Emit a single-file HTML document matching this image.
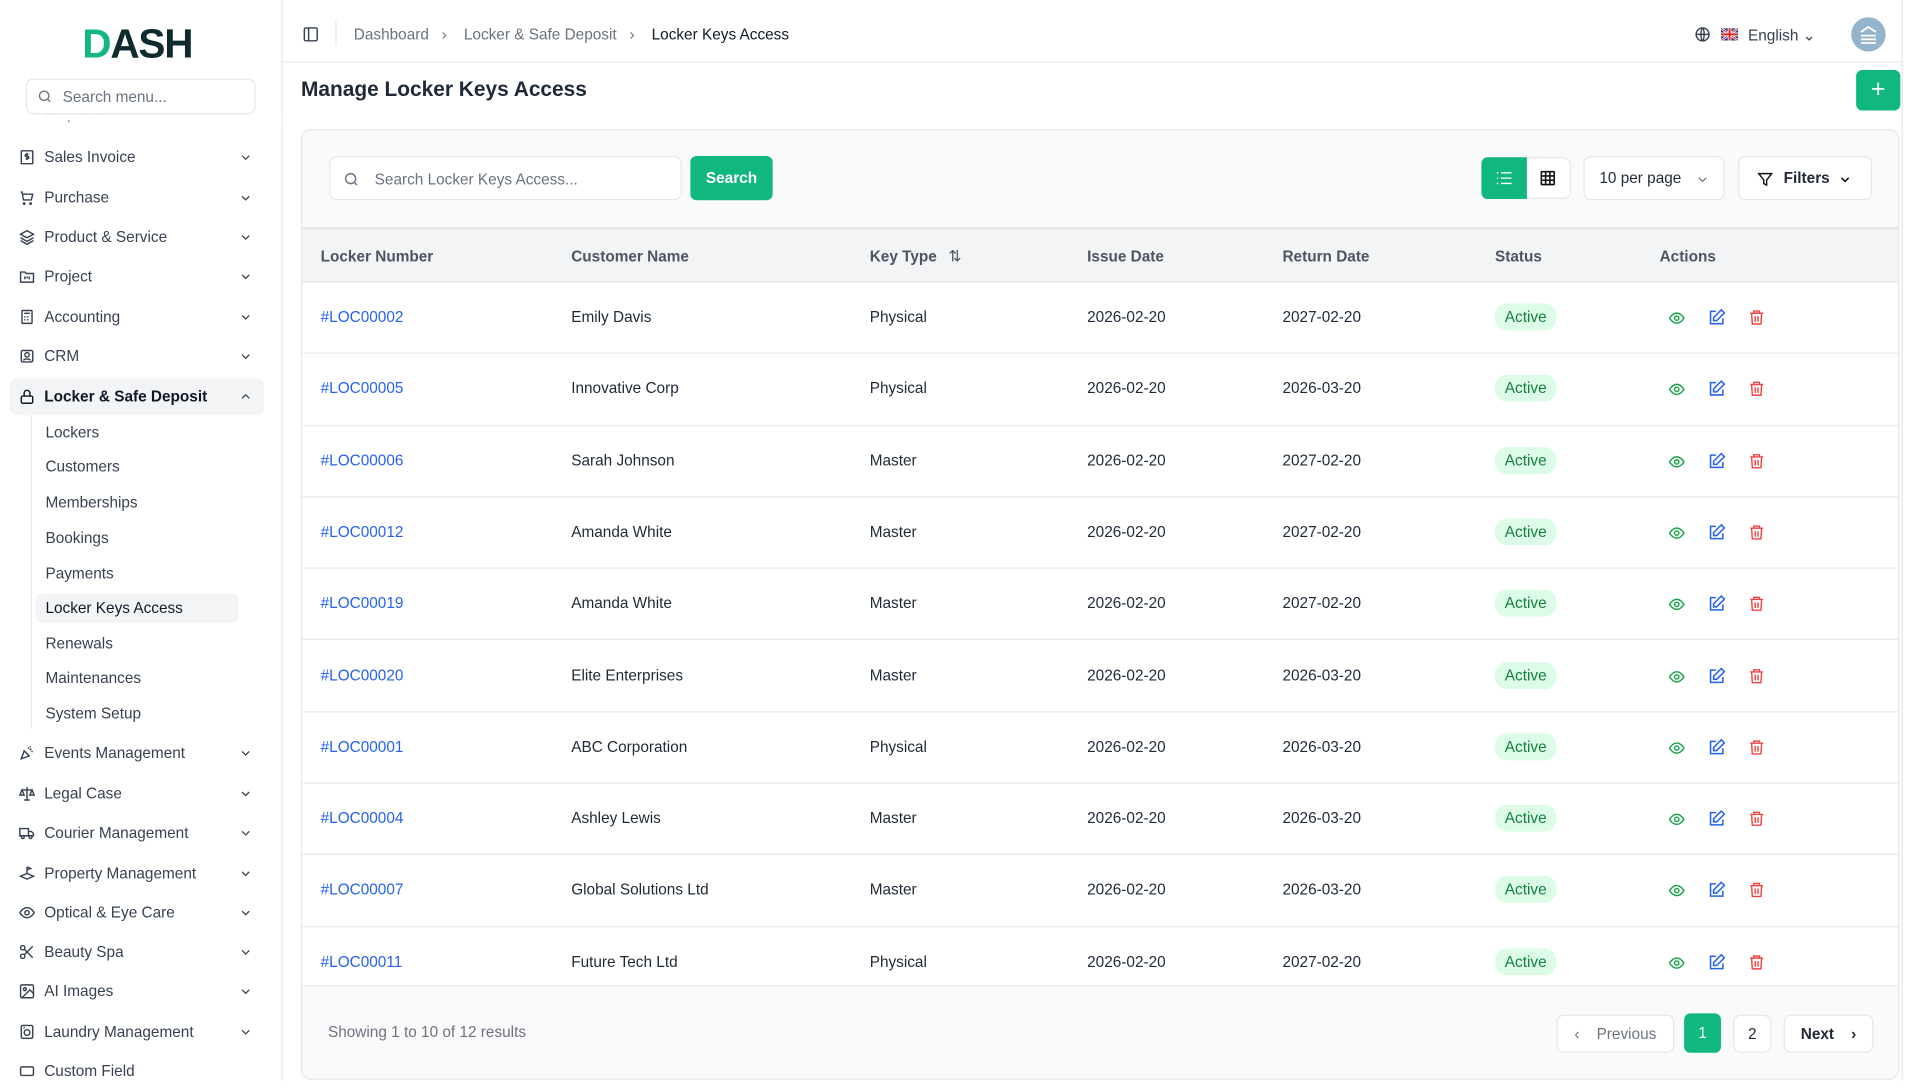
<!DOCTYPE html>
<html><head><meta charset="utf-8">
<style>
*{box-sizing:border-box;margin:0;padding:0}
html,body{width:1920px;height:1080px;overflow:hidden;background:#fff;font-family:"Liberation Sans",sans-serif;color:#1f2937}
#w{position:absolute;left:0;top:0;width:1563px;height:880px;transform:scale(1.2284);transform-origin:0 0}
.a{position:absolute}
.sb{left:0;top:0;width:230px;height:880px;border-right:1px solid #e5e7eb;background:#fff}
.mi{position:absolute;left:8px;width:207px;height:30px;display:flex;align-items:center;font-size:12.5px;color:#374151}
.mi svg.ic{position:absolute;left:7px;width:14px;height:14px}
.mi span{position:absolute;left:28px}
.mi .cv{position:absolute;right:10px;width:10px;height:10px}
.sub{position:absolute;left:37px;font-size:12.5px;color:#374151}
.hd{left:230px;top:0;width:1318px;height:51px;border-bottom:1px solid #e5e7eb}
.card{left:245px;top:105px;width:1301px;height:774px;border:1px solid #e5e7eb;border-radius:8px;background:#fafafa;overflow:hidden}
.th{position:absolute;top:79px;left:0;width:1301px;height:45px;background:#f3f4f6;border-top:2px solid #e5e7eb;border-bottom:1px solid #e5e7eb;font-size:12.5px;font-weight:bold;color:#4b5563}
.th div,.tr div{position:absolute;top:0;line-height:44px}
.tr{position:absolute;left:0;width:1301px;height:58.3px;background:#fff;border-bottom:1px solid #e5e7eb;font-size:12.5px;color:#1f2937}
.tr div{line-height:57px}
.lk{color:#2563eb}
.bd{background:#dcfce7;color:#15803d;border-radius:10px;padding:0 8px;line-height:22px!important;top:17px!important;font-size:12.5px}
.btn{position:absolute;border:1px solid #e5e7eb;border-radius:6px;background:#fff;display:flex;align-items:center;justify-content:center;font-size:12.5px}
</style></head><body><div id="w">

<div class="a sb">
 <div class="a" style="left:67px;top:17px;font-size:33px;font-weight:bold;letter-spacing:-1px;color:#0f2a2e;font-family:'Liberation Sans',sans-serif"><span style="color:#10b77f">D</span>ASH</div>
 <div class="a" style="left:21px;top:64px;width:187px;height:29px;border:1px solid #e5e7eb;border-radius:6px;font-size:12.5px;color:#6b7280;padding:7px 0 0 29px;background:#fff;z-index:2">Search menu...
  <svg style="position:absolute;left:8px;top:7px" width="13" height="13" viewBox="0 0 24 24" fill="none" stroke="#6b7280" stroke-width="2"><circle cx="11" cy="11" r="7"/><path d="M20 20l-4-4"/></svg></div>
 <div class="a" style="left:36px;top:86px;font-size:12px;color:#6b7280">Proposal</div>
 <div class="a" style="left:0;top:93px;width:229px;height:5px;background:#fff;z-index:1"></div>

 <div class="mi" style="top:113px"><svg class="ic" viewBox="0 0 24 24" fill="none" stroke="#374151" stroke-width="2"><rect x="4" y="3" width="16" height="18" rx="1"/><path d="M14 8h-3a1.5 1.5 0 000 3h2a1.5 1.5 0 010 3h-3M12 6v10"/></svg><span>Sales Invoice</span><svg class="cv" viewBox="0 0 24 24" fill="none" stroke="#374151" stroke-width="2.5"><path d="M5 9l7 7 7-7"/></svg></div>
 <div class="mi" style="top:146px"><svg class="ic" viewBox="0 0 24 24" fill="none" stroke="#374151" stroke-width="2"><path d="M3 4h2l2 11h11l2-8H6"/><circle cx="8" cy="20" r="1"/><circle cx="17" cy="20" r="1"/></svg><span>Purchase</span><svg class="cv" viewBox="0 0 24 24" fill="none" stroke="#374151" stroke-width="2.5"><path d="M5 9l7 7 7-7"/></svg></div>
 <div class="mi" style="top:178px"><svg class="ic" viewBox="0 0 24 24" fill="none" stroke="#374151" stroke-width="2"><path d="M12 3l9 5-9 5-9-5zM3 13l9 5 9-5M3 17l9 5 9-5"/></svg><span>Product &amp; Service</span><svg class="cv" viewBox="0 0 24 24" fill="none" stroke="#374151" stroke-width="2.5"><path d="M5 9l7 7 7-7"/></svg></div>
 <div class="mi" style="top:210px"><svg class="ic" viewBox="0 0 24 24" fill="none" stroke="#374151" stroke-width="2"><path d="M3 6h6l2 2h10v12H3z"/><path d="M9 12v4M12 12v3M15 12v4"/></svg><span>Project</span><svg class="cv" viewBox="0 0 24 24" fill="none" stroke="#374151" stroke-width="2.5"><path d="M5 9l7 7 7-7"/></svg></div>
 <div class="mi" style="top:243px"><svg class="ic" viewBox="0 0 24 24" fill="none" stroke="#374151" stroke-width="2"><rect x="5" y="3" width="14" height="18" rx="1"/><path d="M8 7h8M8 12h2M12 12h2M8 16h2M12 16h2"/></svg><span>Accounting</span><svg class="cv" viewBox="0 0 24 24" fill="none" stroke="#374151" stroke-width="2.5"><path d="M5 9l7 7 7-7"/></svg></div>
 <div class="mi" style="top:275px"><svg class="ic" viewBox="0 0 24 24" fill="none" stroke="#374151" stroke-width="2"><rect x="4" y="4" width="16" height="16" rx="2"/><circle cx="12" cy="10" r="3"/><path d="M7 18c1-3 9-3 10 0"/></svg><span>CRM</span><svg class="cv" viewBox="0 0 24 24" fill="none" stroke="#374151" stroke-width="2.5"><path d="M5 9l7 7 7-7"/></svg></div>
 <div class="mi" style="top:308px;background:#f3f4f6;border-radius:6px;color:#111827;font-weight:600"><svg class="ic" viewBox="0 0 24 24" fill="none" stroke="#111827" stroke-width="2"><rect x="4" y="11" width="16" height="10" rx="2"/><path d="M8 11V7a4 4 0 018 0v4"/></svg><span>Locker &amp; Safe Deposit</span><svg class="cv" viewBox="0 0 24 24" fill="none" stroke="#374151" stroke-width="2.5"><path d="M5 15l7-7 7 7"/></svg></div>
 <div class="a" style="left:25px;top:338px;width:1px;height:255px;background:#e5e7eb"></div>
 <div class="sub" style="top:345px">Lockers</div>
 <div class="sub" style="top:373px">Customers</div>
 <div class="sub" style="top:402px">Memberships</div>
 <div class="sub" style="top:431px">Bookings</div>
 <div class="sub" style="top:460px">Payments</div>
 <div class="a" style="left:29px;top:483px;width:165px;height:24px;background:#f3f4f6;border-radius:5px"></div>
 <div class="sub" style="top:488px;color:#111827">Locker Keys Access</div>
 <div class="sub" style="top:517px">Renewals</div>
 <div class="sub" style="top:545px">Maintenances</div>
 <div class="sub" style="top:574px">System Setup</div>

 <div class="mi" style="top:598px"><svg class="ic" viewBox="0 0 24 24" fill="none" stroke="#374151" stroke-width="2"><path d="M4 20l4-11 7 7zM14 4v2M18 6l-2 2M20 10h-2M16 3l1 1"/></svg><span>Events Management</span><svg class="cv" viewBox="0 0 24 24" fill="none" stroke="#374151" stroke-width="2.5"><path d="M5 9l7 7 7-7"/></svg></div>
 <div class="mi" style="top:631px"><svg class="ic" viewBox="0 0 24 24" fill="none" stroke="#374151" stroke-width="2"><path d="M12 3v18M5 7h14M5 7l-3 7h6zM19 7l-3 7h6zM8 21h8"/></svg><span>Legal Case</span><svg class="cv" viewBox="0 0 24 24" fill="none" stroke="#374151" stroke-width="2.5"><path d="M5 9l7 7 7-7"/></svg></div>
 <div class="mi" style="top:663px"><svg class="ic" viewBox="0 0 24 24" fill="none" stroke="#374151" stroke-width="2"><path d="M2 6h12v10H2zM14 10h4l3 3v3h-7"/><circle cx="6" cy="18" r="2"/><circle cx="17" cy="18" r="2"/></svg><span>Courier Management</span><svg class="cv" viewBox="0 0 24 24" fill="none" stroke="#374151" stroke-width="2.5"><path d="M5 9l7 7 7-7"/></svg></div>
 <div class="mi" style="top:696px"><svg class="ic" viewBox="0 0 24 24" fill="none" stroke="#374151" stroke-width="2"><path d="M12 3v9M12 3l5 2-5 2M3 16l9-4 9 4-9 4z"/></svg><span>Property Management</span><svg class="cv" viewBox="0 0 24 24" fill="none" stroke="#374151" stroke-width="2.5"><path d="M5 9l7 7 7-7"/></svg></div>
 <div class="mi" style="top:728px"><svg class="ic" viewBox="0 0 24 24" fill="none" stroke="#374151" stroke-width="2"><path d="M2 12s4-7 10-7 10 7 10 7-4 7-10 7S2 12 2 12z"/><circle cx="12" cy="12" r="3"/></svg><span>Optical &amp; Eye Care</span><svg class="cv" viewBox="0 0 24 24" fill="none" stroke="#374151" stroke-width="2.5"><path d="M5 9l7 7 7-7"/></svg></div>
 <div class="mi" style="top:760px"><svg class="ic" viewBox="0 0 24 24" fill="none" stroke="#374151" stroke-width="2"><circle cx="6" cy="6" r="3"/><circle cx="6" cy="18" r="3"/><path d="M8 8l12 12M8 16L20 4"/></svg><span>Beauty Spa</span><svg class="cv" viewBox="0 0 24 24" fill="none" stroke="#374151" stroke-width="2.5"><path d="M5 9l7 7 7-7"/></svg></div>
 <div class="mi" style="top:792px"><svg class="ic" viewBox="0 0 24 24" fill="none" stroke="#374151" stroke-width="2"><rect x="3" y="3" width="18" height="18" rx="2"/><circle cx="9" cy="9" r="2"/><path d="M21 15l-5-5L5 21"/></svg><span>AI Images</span><svg class="cv" viewBox="0 0 24 24" fill="none" stroke="#374151" stroke-width="2.5"><path d="M5 9l7 7 7-7"/></svg></div>
 <div class="mi" style="top:825px"><svg class="ic" viewBox="0 0 24 24" fill="none" stroke="#374151" stroke-width="2"><rect x="4" y="3" width="16" height="18" rx="2"/><circle cx="12" cy="13" r="4"/><path d="M7 6h2"/></svg><span>Laundry Management</span><svg class="cv" viewBox="0 0 24 24" fill="none" stroke="#374151" stroke-width="2.5"><path d="M5 9l7 7 7-7"/></svg></div>
 <div class="mi" style="top:857px"><svg class="ic" viewBox="0 0 24 24" fill="none" stroke="#374151" stroke-width="2"><rect x="3" y="6" width="18" height="12" rx="2"/></svg><span>Custom Field</span></div>
</div>

<div class="a hd">
 <svg class="a" style="left:16px;top:21px" width="14" height="14" viewBox="0 0 24 24" fill="none" stroke="#374151" stroke-width="2"><rect x="3" y="3" width="18" height="18" rx="2"/><path d="M9 3v18"/></svg>
 <div class="a" style="left:43px;top:17px;width:1px;height:20px;background:#e5e7eb"></div>
 <div class="a" style="left:58px;top:21px;font-size:12.5px;color:#6b7280;white-space:nowrap">Dashboard &nbsp;&nbsp;›&nbsp;&nbsp;&nbsp; Locker &amp; Safe Deposit &nbsp;&nbsp;›&nbsp;&nbsp;&nbsp; <span style="color:#111827">Locker Keys Access</span></div>
 <svg class="a" style="left:1149px;top:21px" width="14" height="14" viewBox="0 0 24 24" fill="none" stroke="#374151" stroke-width="2"><circle cx="12" cy="12" r="9"/><path d="M3 12h18M12 3c3 3 3 15 0 18M12 3c-3 3-3 15 0 18"/></svg>
 <svg class="a" style="left:1171px;top:23px" width="14" height="10" viewBox="0 0 14 10"><rect width="14" height="10" fill="#1e3a8a"/><path d="M0 0l14 10M14 0L0 10" stroke="#fff" stroke-width="2"/><path d="M0 0l14 10M14 0L0 10" stroke="#dc2626" stroke-width="0.8"/><path d="M7 0v10M0 5h14" stroke="#fff" stroke-width="3"/><path d="M7 0v10M0 5h14" stroke="#dc2626" stroke-width="1.6"/></svg>
 <div class="a" style="left:1193px;top:21px;font-size:12.5px;color:#374151">English ⌄</div>
 <div class="a" style="left:1277px;top:14px;width:28px;height:28px;border-radius:50%;background:#94b3cc"><svg style="position:absolute;left:7px;top:6px" width="14" height="16" viewBox="0 0 14 16" fill="none" stroke="#fff" stroke-width="1.5"><path d="M1 6l6-4 6 4M1 9h12M1 12h12M1 15h12"/></svg></div>
</div>
<div class="a" style="left:1548px;top:0;width:1px;height:880px;background:#e5e7eb"></div>

<div class="a" style="left:245px;top:63px;font-size:17px;font-weight:600;color:#1f2937">Manage Locker Keys Access</div>
<div class="a" style="left:1511px;top:57px;width:36px;height:33px;background:#10b77f;border-radius:5px;color:#fff;font-size:20px;text-align:center;line-height:32px">+</div>

<div class="a card">
 <div class="a" style="left:22px;top:21px;width:287px;height:36px;border:1px solid #e5e7eb;border-radius:6px;background:#fff;font-size:12.5px;color:#6b7280;padding:11px 0 0 36px">Search Locker Keys Access...
  <svg style="position:absolute;left:10px;top:11px" width="14" height="14" viewBox="0 0 24 24" fill="none" stroke="#6b7280" stroke-width="2"><circle cx="11" cy="11" r="7"/><path d="M20 20l-4-4"/></svg></div>
 <div class="a" style="left:316px;top:21px;width:67px;height:36px;background:#10b77f;border-radius:5px;color:#fff;font-size:12.5px;font-weight:600;text-align:center;line-height:36px">Search</div>
 <div class="btn" style="left:960px;top:22px;width:73px;height:34px"></div>
 <div class="a" style="left:960px;top:22px;width:37px;height:34px;background:#10b77f;border-radius:5px 0 0 5px"><svg style="position:absolute;left:12px;top:11px" width="13" height="12" viewBox="0 0 24 22" fill="none" stroke="#fff" stroke-width="2"><path d="M7 3h16M7 11h16M7 19h16M1 3h2M1 11h2M1 19h2"/></svg></div>
 <svg class="a" style="left:1007px;top:32px" width="14" height="14" viewBox="0 0 24 24" fill="none" stroke="#111" stroke-width="2.2"><rect x="3" y="3" width="18" height="18" rx="1"/><path d="M9 3v18M15 3v18M3 9h18M3 15h18"/></svg>
 <div class="btn" style="left:1043px;top:21px;width:115px;height:36px;justify-content:flex-start;padding-left:12px">10 per page<svg style="position:absolute;right:12px;top:13px" width="10" height="10" viewBox="0 0 24 24" fill="none" stroke="#6b7280" stroke-width="2.5"><path d="M5 9l7 7 7-7"/></svg></div>
 <div class="btn" style="left:1169px;top:21px;width:109px;height:36px;font-weight:600;justify-content:flex-start;padding-left:36px">Filters<svg style="position:absolute;left:14px;top:11px" width="14" height="14" viewBox="0 0 24 24" fill="none" stroke="#111" stroke-width="2"><path d="M3 4h18l-7 9v7l-4-2v-5z"/></svg><svg style="position:absolute;right:16px;top:13px" width="10" height="10" viewBox="0 0 24 24" fill="none" stroke="#111" stroke-width="3"><path d="M5 9l7 7 7-7"/></svg></div>

 <div class="th">
  <div style="left:15px">Locker Number</div><div style="left:219px">Customer Name</div><div style="left:462px">Key Type <span style="font-weight:normal;margin-left:6px">⇅</span></div><div style="left:639px">Issue Date</div><div style="left:798px">Return Date</div><div style="left:971px">Status</div><div style="left:1105px">Actions</div>
 </div>
 <div id="rows" style="position:absolute;left:0;top:124px;width:1301px;height:573px;overflow:hidden;border-bottom:1px solid #e5e7eb;background:#fff"></div>

 <div class="a" style="left:21px;top:727px;font-size:12.5px;color:#6b7280">Showing 1 to 10 of 12 results</div>
 <div class="btn" style="left:1021px;top:720px;width:96px;height:31px;color:#6b7280">‹&nbsp;&nbsp;&nbsp; Previous</div>
 <div class="a" style="left:1125px;top:719px;width:30px;height:32px;background:#10b77f;border-radius:5px;color:#fff;font-size:12.5px;text-align:center;line-height:32px">1</div>
 <div class="btn" style="left:1165px;top:720px;width:31px;height:31px">2</div>
 <div class="btn" style="left:1206px;top:720px;width:73px;height:31px;font-weight:600">Next&nbsp;&nbsp;&nbsp; ›</div>
</div>
</div>
<script>
var d=[["#LOC00002","Emily Davis","Physical","2027-02-20"],["#LOC00005","Innovative Corp","Physical","2026-03-20"],["#LOC00006","Sarah Johnson","Master","2027-02-20"],["#LOC00012","Amanda White","Master","2027-02-20"],["#LOC00019","Amanda White","Master","2027-02-20"],["#LOC00020","Elite Enterprises","Master","2026-03-20"],["#LOC00001","ABC Corporation","Physical","2026-03-20"],["#LOC00004","Ashley Lewis","Master","2026-03-20"],["#LOC00007","Global Solutions Ltd","Master","2026-03-20"],["#LOC00011","Future Tech Ltd","Physical","2027-02-20"]];
var h="";d.forEach(function(r,i){var t=i*58.3;
h+='<div class="tr" style="top:'+t+'px"><div class="lk" style="left:15px">'+r[0]+'</div><div style="left:219px">'+r[1]+'</div><div style="left:462px">'+r[2]+'</div><div style="left:639px">2026-02-20</div><div style="left:798px">'+r[3]+'</div><div class="bd" style="left:971px">Active</div>'+
'<svg style="position:absolute;left:1112px;top:22px" width="14" height="14" viewBox="0 0 24 24" fill="none" stroke="#16a34a" stroke-width="2"><path d="M2 12s4-7 10-7 10 7 10 7-4 7-10 7S2 12 2 12z"/><circle cx="12" cy="12" r="3"/></svg>'+
'<svg style="position:absolute;left:1144px;top:21px" width="15" height="15" viewBox="0 0 24 24" fill="none" stroke="#2563eb" stroke-width="2"><path d="M11 4H4v16h16v-7"/><path d="M18 2l4 4-10 10H8v-4z"/></svg>'+
'<svg style="position:absolute;left:1177px;top:21px" width="14" height="15" viewBox="0 0 24 24" fill="none" stroke="#ef4444" stroke-width="2"><path d="M3 6h18M8 6V3h8v3M5 6l1 15h12l1-15M10 10v8M14 10v8"/></svg></div>';});
document.getElementById("rows").innerHTML=h;
</script>
</body></html>
